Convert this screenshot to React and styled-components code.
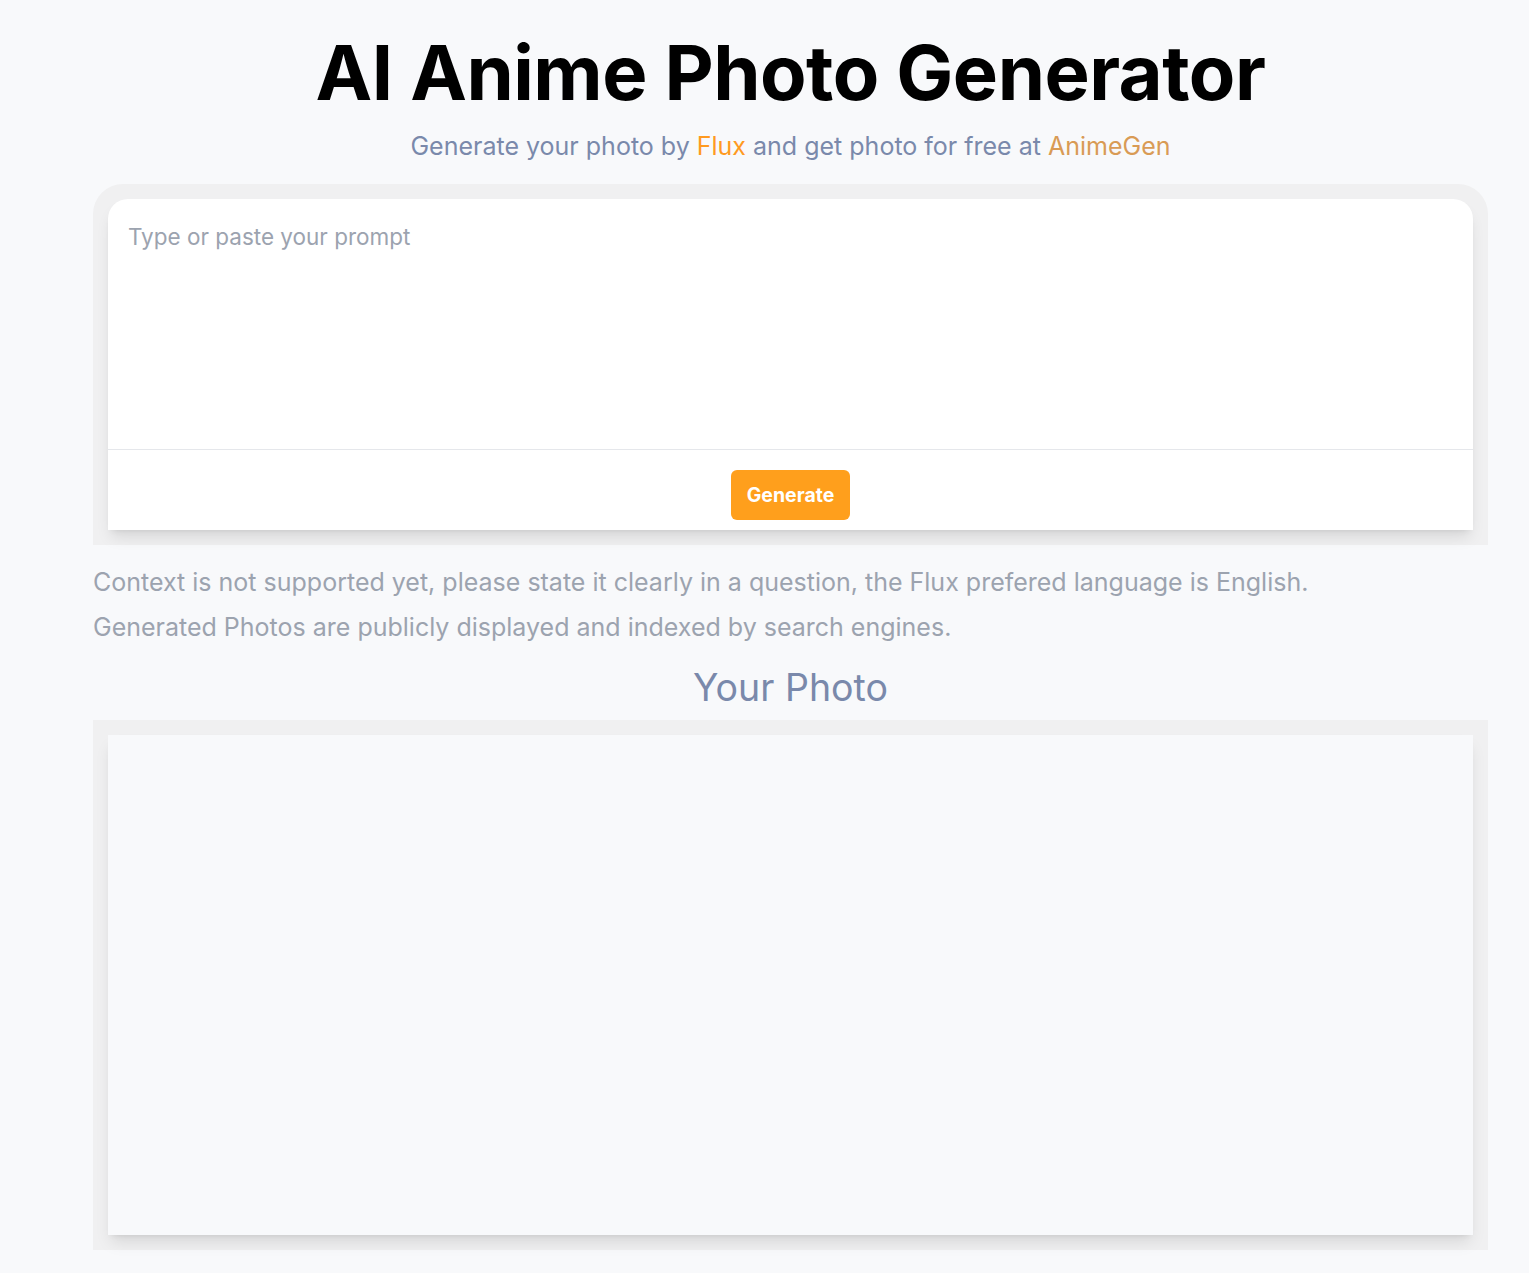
import React from "react";
import styled, { createGlobalStyle } from "styled-components";

const Global = createGlobalStyle`
  html, body { margin: 0; padding: 0; background: #f8f9fb; }
  body { font-family: Inter, "Noto Sans", sans-serif; }
  * { box-sizing: border-box; }
`;

const Page = styled.main`
  padding: 0 41px 0 93px;
  min-height: 1273px;
  display: flex;
  flex-direction: column;
`;

const Title = styled.h1`
  margin: 26px 0 0;
  text-align: center;
  font-size: 76px;
  line-height: 92px;
  font-weight: 700;
  color: #000;
  letter-spacing: -0.5px;
`;

const Subtitle = styled.p`
  margin: 13px 0 0;
  text-align: center;
  font-size: 25px;
  line-height: 30px;
  color: #7a89ab;
`;

const Accent = styled.span`
  color: ${(p) => p.$c};
`;

const Shell = styled.section`
  margin-top: ${(p) => p.$mt}px;
  background: #f0f0f1;
  border-radius: ${(p) => (p.$round ? "30px 30px 0 0" : "0")};
  padding: 15px;
`;

const Card = styled.div`
  background: ${(p) => p.$bg};
  border-radius: ${(p) => (p.$round ? "20px 20px 0 0" : "0")};
  box-shadow: 0 10px 15px -3px rgba(0, 0, 0, 0.1), 0 4px 6px -4px rgba(0, 0, 0, 0.1);
  height: ${(p) => p.$h || "auto"};
  overflow: hidden;
`;

const Prompt = styled.textarea`
  display: block;
  width: 100%;
  height: 251px;
  border: none;
  border-bottom: 1px solid #e5e7eb;
  resize: none;
  outline: none;
  background: transparent;
  padding: 24px 21px 24px 20px;
  font-family: Inter, "Noto Sans", sans-serif;
  font-size: 22.5px;
  line-height: 28px;
  color: #111827;
  &::placeholder { color: #9ca3af; }
`;

const Footer = styled.div`
  height: 80px;
  padding-top: 20px;
  display: flex;
  align-items: flex-start;
  justify-content: center;
`;

const Button = styled.button`
  width: 119px;
  height: 50px;
  border: none;
  border-radius: 6px;
  background: #ff9f1c;
  color: #fff;
  font-family: Inter, "Noto Sans", sans-serif;
  font-size: 19.5px;
  font-weight: 700;
  cursor: pointer;
`;

const Note = styled.p`
  margin: 0;
  font-size: 25px;
  line-height: 45px;
  color: #9ca3af;
`;

const Notes = styled.div`
  margin-top: 15px;
`;

const SectionTitle = styled.h2`
  margin: 15px 0 0;
  text-align: center;
  font-size: 37.5px;
  line-height: 46px;
  font-weight: 400;
  color: #7a89ab;
`;

export default function App() {
  return (
    <>
      <Global />
      <Page>
        <Title>AI Anime Photo Generator</Title>
        <Subtitle>
          Generate your photo by <Accent $c="#ff9a1f">Flux</Accent> and get photo for free at{" "}
          <Accent $c="#d99b55">AnimeGen</Accent>
        </Subtitle>
        <Shell $round $mt={23}>
          <Card $bg="#fff" $round>
            <Prompt placeholder="Type or paste your prompt" />
            <Footer>
              <Button>Generate</Button>
            </Footer>
          </Card>
        </Shell>
        <Notes>
          <Note>
            Context is not supported yet, please state it clearly in a question, the Flux prefered language is English.
          </Note>
          <Note>Generated Photos are publicly displayed and indexed by search engines.</Note>
        </Notes>
        <SectionTitle>Your Photo</SectionTitle>
        <Shell $mt={9}>
          <Card $bg="#f8f9fb" $h="500px" />
        </Shell>
      </Page>
    </>
  );
}
